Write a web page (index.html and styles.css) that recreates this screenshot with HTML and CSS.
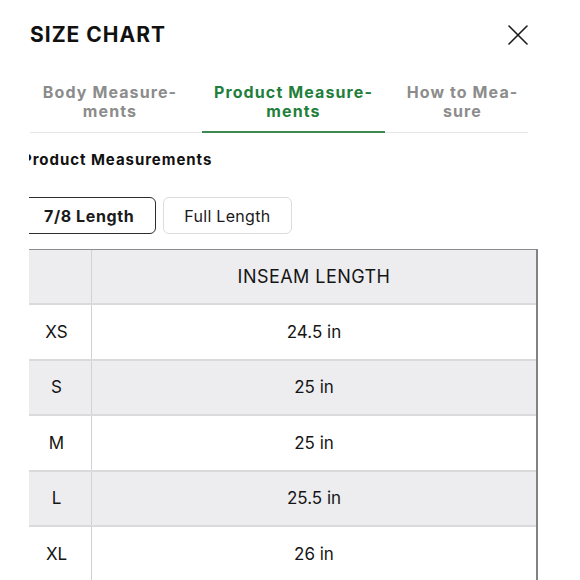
FILE: index.html
```html
<!DOCTYPE html>
<html lang="en">
<head>
<meta charset="utf-8">
<title>Size Chart</title>
<link rel="stylesheet" href="styles.css">
</head>
<body>
<div class="modal">
  <header class="head">
    <h1 class="title">SIZE CHART</h1>
    <button class="close" aria-label="Close">
      <svg width="20" height="20" viewBox="0 0 20 20"><path d="M1 1 L19 19 M19 1 L1 19" stroke="#1a1a1a" stroke-width="1.6" fill="none" stroke-linecap="round"/></svg>
    </button>
  </header>
  <nav class="tabs">
    <div class="tab">Body Measure-<br>ments</div>
    <div class="tab active">Product Measure-<br>ments</div>
    <div class="tab">How to Mea-<br>sure</div>
  </nav>
  <div class="clip">
    <div class="content">
      <h2 class="subtitle">Product Measurements</h2>
      <div class="toggles">
        <button class="toggle on">7/8 Length</button>
        <button class="toggle">Full Length</button>
      </div>
      <div class="chart">
        <div class="row head-row"><div class="c1"></div><div class="c2 hd">INSEAM LENGTH</div></div>
        <div class="row"><div class="c1">XS</div><div class="c2">24.5 in</div></div>
        <div class="row alt"><div class="c1">S</div><div class="c2">25 in</div></div>
        <div class="row"><div class="c1">M</div><div class="c2">25 in</div></div>
        <div class="row alt"><div class="c1">L</div><div class="c2">25.5 in</div></div>
        <div class="row"><div class="c1">XL</div><div class="c2">26 in</div></div>
      </div>
    </div>
  </div>
</div>
</body>
</html>
```
FILE: styles.css
```css
html, body {
  margin: 0;
  padding: 0;
  height: 580px;
  overflow: hidden;
  background: #fff;
}
body {
  font-family: Inter, "Liberation Sans", Arial, sans-serif;
  color: #141414;
}
.modal {
  padding-top: 22px;
}
.head {
  display: flex;
  justify-content: space-between;
  align-items: center;
  width: 498px;
  margin-left: 30px;
  height: 25px;
}
.title {
  margin: 0;
  font-size: 21px;
  line-height: 25px;
  font-weight: 700;
  letter-spacing: 1px;
  color: #111;
}
.close {
  border: 0;
  background: none;
  padding: 0;
  width: 20px;
  height: 20px;
  display: flex;
}
.tabs {
  display: grid;
  grid-template-columns: 160px 183px 131px;
  column-gap: 12px;
  width: 498px;
  margin-left: 30px;
  margin-top: 36px;
  border-bottom: 1px solid #e6e6e6;
}
.tab {
  text-align: center;
  font-size: 16px;
  line-height: 19px;
  font-weight: 700;
  letter-spacing: 1.1px;
  color: #8c8c8c;
  padding-bottom: 10px;
  border-bottom: 2px solid transparent;
  margin-bottom: -1px;
}
.tab.active {
  color: #1f7f3b;
  border-bottom-color: #3a8a52;
}
.clip {
  margin-left: 29px;
  overflow: hidden;
}
.content {
  margin-left: -7px;
}
.subtitle {
  margin: 17px 0 0;
  font-size: 15px;
  line-height: 20px;
  font-weight: 700;
  letter-spacing: 0.95px;
  color: #111;
}
.toggles {
  display: flex;
  gap: 7px;
  margin-top: 27px;
}
.toggle {
  font-family: Inter, "Liberation Sans", Arial, sans-serif;
  font-size: 16px;
  height: 37px;
  padding: 0 20px;
  background: #fff;
  color: #1a1a1a;
  border: 1px solid #dcdcdc;
  border-radius: 6px;
  letter-spacing: 0.3px;
}
.toggle.on {
  font-weight: 700;
  letter-spacing: 0.6px;
  padding: 0 21px;
  border: 1.5px solid #2e2e2e;
}
.chart {
  margin-top: 15px;
  width: 514px;
  border-top: 1.5px solid #8c8c8c;
  border-right: 2px solid #828282;
}
.row {
  display: grid;
  grid-template-columns: 70px 1fr;
  height: 55.4px;
  box-sizing: border-box;
  border-bottom: 2px solid #dadadd;
  background: #fff;
}
.row.alt, .row.head-row {
  background: #ededf0;
}
.c1, .c2 {
  display: flex;
  align-items: center;
  justify-content: center;
  font-size: 17px;
  color: #151515;
}
.c1 {
  border-right: 1.5px solid #d2d2d4;
}
.c2.hd {
  font-size: 18px;
  letter-spacing: 0.45px;
}
```
